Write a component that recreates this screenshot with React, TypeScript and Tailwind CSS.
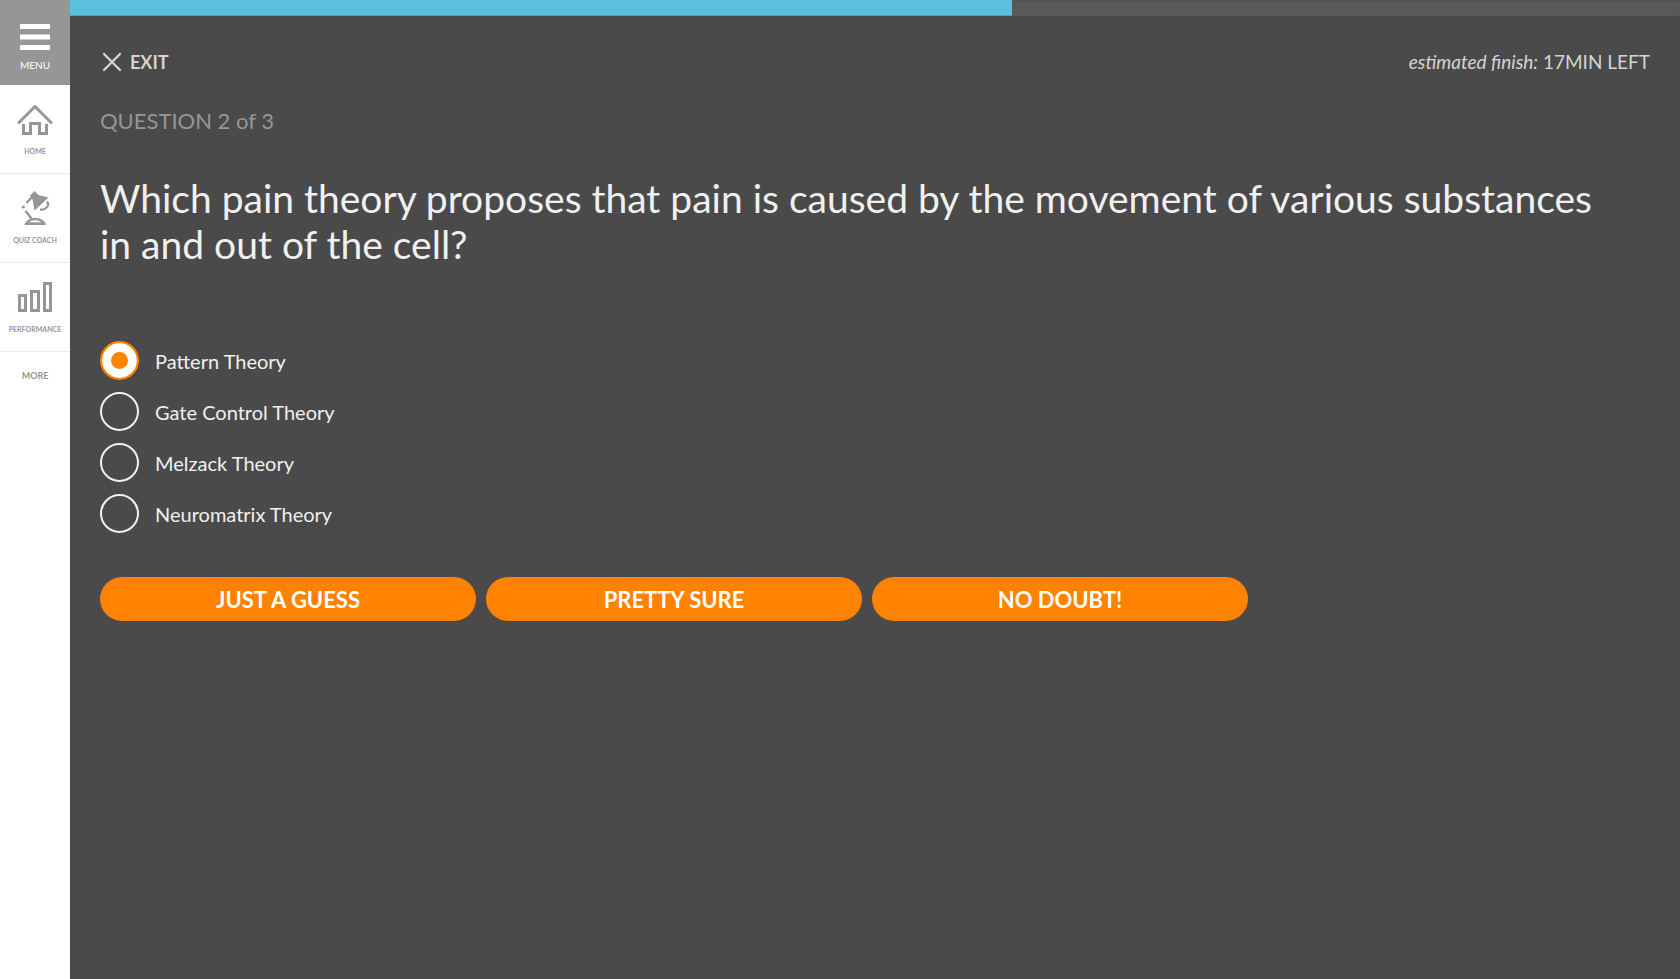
import { useState } from "react";
import type { ReactNode } from "react";

const OPTIONS = ["Pattern Theory", "Gate Control Theory", "Melzack Theory", "Neuromatrix Theory"];
const CONFIDENCE = ["JUST A GUESS", "PRETTY SURE", "NO DOUBT!"];
const PROGRESS = 58.5;

function HomeIcon() {
  return (
    <svg width="36" height="32" viewBox="0 0 36 32" fill="none" stroke="#969696" aria-hidden="true">
      <path d="M2 19.5 18 3.5 34 19.5" strokeWidth="3" strokeLinecap="round" />
      <path d="M6.5 21V30.5H13.5V20.5H22.5V30.5H29.5V21" strokeWidth="3" />
    </svg>
  );
}

function LampIcon() {
  return (
    <svg width="36" height="36" viewBox="0 0 36 36" fill="none" stroke="#969696" aria-hidden="true">
      <path d="M13 5.5 17.5 1 21.5 5 31.5 7.5 17.5 20.5 15.5 9.5Z" fill="#969696" stroke="none" />
      <path d="M15 7 9.5 13" strokeWidth="2.5" />
      <circle cx="6.3" cy="17" r="1.6" fill="#969696" stroke="none" />
      <path d="M8.5 21 14.5 28.5" strokeWidth="2.5" />
      <path d="M30 11.5C33 15.5 29 20.5 23 19.5" strokeWidth="2.2" />
      <path d="M7.5 35C9.5 25.5 27 25.5 29 35Z" fill="#969696" stroke="none" />
      <path d="M12 32.3C15 29.4 21.5 29.4 24.5 32.3Z" fill="#ffffff" stroke="none" />
    </svg>
  );
}

function BarsIcon() {
  return (
    <svg width="36" height="32" viewBox="0 0 36 32" fill="none" stroke="#969696" strokeWidth="3" aria-hidden="true">
      <rect x="2.5" y="14.5" width="6" height="15" />
      <rect x="14.5" y="10.5" width="7" height="19" />
      <rect x="27.5" y="2.5" width="6" height="27" />
    </svg>
  );
}

function NavItem({ icon, label }: { icon: ReactNode; label: string }) {
  return (
    <a
      href="#"
      className="flex h-[89px] flex-col items-center justify-between border-b border-[#ebebeb] pt-4 pb-4 text-[7px] leading-3 font-bold text-[#969696]"
    >
      <span className="flex h-9 items-center">{icon}</span>
      <span className="whitespace-nowrap">{label}</span>
    </a>
  );
}

export default function App() {
  const [answer, setAnswer] = useState(OPTIONS[0]);

  return (
    <div className="flex min-h-screen bg-[#4a4a4a] font-['Lato',sans-serif]">
      <nav className="w-[70px] shrink-0 bg-white">
        <button
          type="button"
          className="flex h-[85px] w-full flex-col items-center bg-[#969696] pt-6 text-[10px] leading-3 text-white"
        >
          <svg width="30" height="26" viewBox="0 0 30 26" fill="currentColor" aria-hidden="true">
            <path d="M0 0H30V5H0ZM0 10.5H30V15.5H0ZM0 21H30V26H0Z" />
          </svg>
          <span className="mt-[9px]">MENU</span>
        </button>
        <NavItem icon={<HomeIcon />} label="HOME" />
        <NavItem icon={<LampIcon />} label="QUIZ COACH" />
        <NavItem icon={<BarsIcon />} label="PERFORMANCE" />
        <a href="#" className="flex h-12 items-center justify-center text-[9px] font-bold text-[#969696]">
          MORE
        </a>
      </nav>

      <div className="min-w-0 flex-1">
        <div className="h-4 bg-[#58595b] shadow-[inset_0_1px_2px_rgba(0,0,0,0.1)]">
          <div
            className="h-full bg-[#5bc0de] shadow-[inset_0_-1px_0_rgba(0,0,0,0.15)]"
            style={{ width: `${PROGRESS}%` }}
          />
        </div>

        <main className="px-[30px]">
          <header className="mt-8 flex h-7 items-center justify-between text-[#d4d4d4]">
            <button type="button" className="flex items-center gap-2 pl-[2px] text-lg font-bold">
              <svg width="20" height="20" viewBox="0 0 20 20" fill="none" stroke="currentColor" strokeWidth="2.4" strokeLinecap="round" aria-hidden="true">
                <path d="M2 2 18 18M18 2 2 18" />
              </svg>
              EXIT
            </button>
            <p className="text-[19px]">
              <em>estimated finish:</em> 17MIN LEFT
            </p>
          </header>

          <p className="mt-[31px] text-[22px] leading-7 text-[#969696]">QUESTION 2 of 3</p>
          <h1 className="mt-10 pr-8 text-[39px] leading-[46px] text-[#f0f0f0]">
            Which pain theory proposes that pain is caused by the movement of various substances in and out of the cell?
          </h1>

          <fieldset className="mt-[74px] flex flex-col items-start gap-3">
            {OPTIONS.map((option) => (
              <label key={option} className="flex cursor-pointer items-center gap-4 text-xl text-[#f0f0f0]">
                <input
                  type="radio"
                  name="answer"
                  checked={answer === option}
                  onChange={() => setAnswer(option)}
                  className="size-[39px] shrink-0 appearance-none rounded-full border-2 border-[#f0f0f0] checked:border-[#ff8200] checked:bg-[#ff8200] checked:shadow-[inset_0_0_0_9px_#ffffff]"
                />
                {option}
              </label>
            ))}
          </fieldset>

          <div className="mt-11 grid max-w-[1148px] grid-cols-3 gap-[10px]">
            {CONFIDENCE.map((label) => (
              <button key={label} type="button" className="h-11 rounded-full bg-[#ff8200] text-[22px] font-bold text-white">
                {label}
              </button>
            ))}
          </div>
        </main>
      </div>
    </div>
  );
}
